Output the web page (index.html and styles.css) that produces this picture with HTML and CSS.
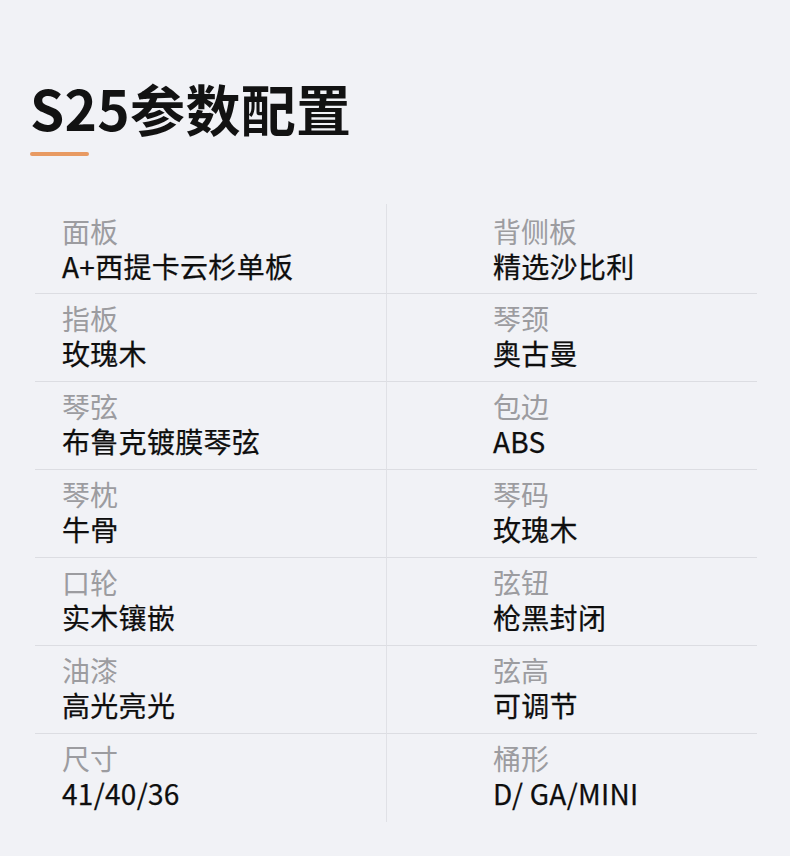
FILE: index.html
```html
<!DOCTYPE html>
<html lang="zh-CN">
<head>
<meta charset="utf-8">
<title>S25参数配置</title>
<link rel="stylesheet" href="styles.css">
</head>
<body>
<main class="page">
  <header class="head">
    <h1 class="title">S25参数配置</h1>
    <div class="accent"></div>
  </header>
  <section class="specs">
    <div class="cell left first"><div class="label">面板</div><div class="value">A+西提卡云杉单板</div></div>
    <div class="cell right first"><div class="label">背侧板</div><div class="value">精选沙比利</div></div>
    <div class="cell left"><div class="label">指板</div><div class="value">玫瑰木</div></div>
    <div class="cell right"><div class="label">琴颈</div><div class="value">奥古曼</div></div>
    <div class="cell left"><div class="label">琴弦</div><div class="value">布鲁克镀膜琴弦</div></div>
    <div class="cell right"><div class="label">包边</div><div class="value">ABS</div></div>
    <div class="cell left"><div class="label">琴枕</div><div class="value">牛骨</div></div>
    <div class="cell right"><div class="label">琴码</div><div class="value">玫瑰木</div></div>
    <div class="cell left"><div class="label">口轮</div><div class="value">实木镶嵌</div></div>
    <div class="cell right"><div class="label">弦钮</div><div class="value">枪黑封闭</div></div>
    <div class="cell left"><div class="label">油漆</div><div class="value">高光亮光</div></div>
    <div class="cell right"><div class="label">弦高</div><div class="value">可调节</div></div>
    <div class="cell left last"><div class="label">尺寸</div><div class="value">41/40/36</div></div>
    <div class="cell right last"><div class="label">桶形</div><div class="value">D/ GA/MINI</div></div>
  </section>
</main>
</body>
</html>
```

FILE: styles.css
```css
html, body {
  margin: 0;
  padding: 0;
  background: #f1f2f6;
}
body {
  width: 790px;
  height: 856px;
  overflow: hidden;
  font-family: "Noto Sans CJK SC", "Noto Sans", sans-serif;
  color: #151515;
}
.page {
  padding: 74px 33px 0 35px;
}
.head {
  margin-left: -5px;
}
.title {
  margin: 0;
  font-size: 55px;
  line-height: 66px;
  font-weight: 700;
  letter-spacing: 0.3px;
  color: #121212;
}
.accent {
  margin-top: 12px;
  width: 59px;
  height: 4px;
  border-radius: 2px;
  background: #e89a62;
}
.specs {
  margin-top: 48px;
  display: grid;
  grid-template-columns: 352px 1fr;
}
.cell {
  box-sizing: border-box;
  height: 88px;
  padding: 7px 0 0;
  border-bottom: 1px solid #dcdde2;
}
.cell.first {
  height: 90px;
  padding-top: 10px;
}
.cell.last {
  border-bottom: none;
}
.left {
  padding-left: 27px;
  border-right: 1px solid #e0e1e6;
}
.right {
  padding-left: 106px;
}
.label {
  font-size: 28px;
  line-height: 35px;
  font-weight: 400;
  color: #9c9ca0;
}
.value {
  font-size: 28px;
  line-height: 35px;
  font-weight: 400;
  letter-spacing: 0.3px;
  color: #0e0e0e;
  -webkit-text-stroke: 0.25px #0e0e0e;
}
```
